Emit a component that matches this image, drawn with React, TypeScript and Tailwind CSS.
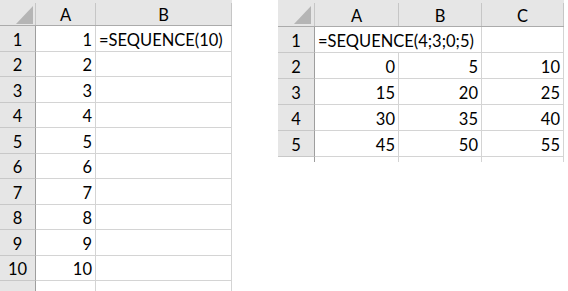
import React from 'react';

type Cell = { text?: string; left?: boolean; spill?: boolean };

interface SheetProps {
  cols: string[];
  widths: string[]; // width classes for the row-number column and each data column
  rows: Cell[][];
  tail: string; // height class of the cut-off row at the bottom
  tailHead: boolean; // whether the cut-off row still shows the grey row header
}

function Corner({ w }: { w: string }) {
  return (
    <div className={`${w} h-full shrink-0 flex`}>
      <div className="flex-1 h-full relative">
        <svg width="17" height="18" className="absolute left-[16px] top-[6px]">
          <polygon points="17,0 17,18 0,18" fill="#b5b5b5" />
        </svg>
      </div>
      <div className="w-px mt-[3px] bg-[#c6c6c6]" />
    </div>
  );
}

function Sheet({ cols, widths, rows, tail, tailHead }: SheetProps) {
  return (
    <div className="flex flex-col">
      {/* column letters */}
      <div className="flex h-[27px] bg-[#e6e6e6] border-b border-[#ababab]">
        <Corner w={widths[0]} />
        {cols.map((c, i) => (
          <div key={c} className={`${widths[i + 1]} shrink-0 flex h-full`}>
            <div className="flex-1 flex items-end justify-center leading-[20px]">{c}</div>
            <div className="w-px mt-[3px] bg-[#c6c6c6]" />
          </div>
        ))}
      </div>

      {rows.map((row, r) => (
        <div key={r} className="flex h-[26px]">
          <div
            className={`${widths[0]} shrink-0 bg-[#e6e6e6] border-r border-b border-r-[#9e9e9e] border-b-[#c8c8c8] flex items-end justify-center pb-px leading-[20px]`}
          >
            {r + 1}
          </div>
          {row.map((cell, i) => (
            <div
              key={i}
              className={`${widths[i + 1]} shrink-0 border-b border-[#d4d4d4] flex items-end pb-px leading-[20px] whitespace-nowrap ${
                cell.spill ? '' : 'border-r'
              } ${cell.left ? 'justify-start pl-[3px]' : 'justify-end pr-[3px]'}`}
            >
              {cell.text}
            </div>
          ))}
        </div>
      ))}

      {/* last row, cut off by the window edge */}
      <div className={`flex ${tail}`}>
        <div
          className={`${widths[0]} shrink-0 border-r border-[#9e9e9e] ${tailHead ? 'bg-[#e6e6e6]' : ''}`}
        />
        {cols.map((c, i) => (
          <div key={c} className={`${widths[i + 1]} shrink-0 border-r border-[#d4d4d4]`} />
        ))}
      </div>
    </div>
  );
}

const single: Cell[][] = Array.from({ length: 10 }, (_, i) => [
  { text: String(i + 1) },
  i === 0 ? { text: '=SEQUENCE(10)', left: true } : {},
]);

const grid: Cell[][] = [
  [{ text: '=SEQUENCE(4;3;0;5)', left: true, spill: true }, {}, {}],
  ...[0, 1, 2, 3].map((r) => [0, 1, 2].map((c) => ({ text: String((r * 3 + c) * 5) }))),
];

export default function App() {
  return (
    <div className="w-[568px] h-[291px] overflow-hidden bg-white flex gap-[46px] text-[16.5px] text-black font-[Lato,sans-serif]">
      <Sheet
        cols={['A', 'B']}
        widths={['w-[36px]', 'w-[60px]', 'w-[136px]']}
        rows={single}
        tail="h-[10px]"
        tailHead
      />
      <Sheet
        cols={['A', 'B', 'C']}
        widths={['w-[37px]', 'w-[84px]', 'w-[83px]', 'w-[82px]']}
        rows={grid}
        tail="h-[5px]"
        tailHead={false}
      />
    </div>
  );
}
